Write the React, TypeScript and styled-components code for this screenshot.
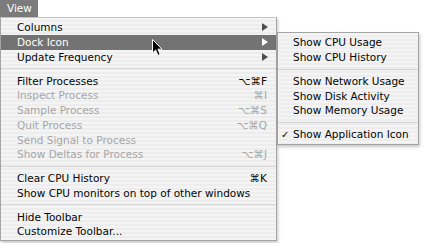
import React from "react";
import styled, { createGlobalStyle } from "styled-components";

const GlobalStyle = createGlobalStyle`
    html, body {
        margin: 0;
        padding: 0;
        background: #ffffff;
    }
    body {
        font-family: "DejaVu Sans", "Liberation Sans", sans-serif;
        font-size: 10.5px;
    }
`;

type Entry =
    | { sep: true }
    | {
          sep?: false;
          label: string;
          shortcut?: string;
          disabled?: boolean;
          submenu?: boolean;
          active?: boolean;
          checked?: boolean;
      };

const viewMenu: Entry[] = [
    { label: "Columns", submenu: true },
    { label: "Dock Icon", submenu: true, active: true },
    { label: "Update Frequency", submenu: true },
    { sep: true },
    { label: "Filter Processes", shortcut: "⌥⌘F" },
    { label: "Inspect Process", shortcut: "⌘I", disabled: true },
    { label: "Sample Process", shortcut: "⌥⌘S", disabled: true },
    { label: "Quit Process", shortcut: "⌥⌘Q", disabled: true },
    { label: "Send Signal to Process", disabled: true },
    { label: "Show Deltas for Process", shortcut: "⌥⌘J", disabled: true },
    { sep: true },
    { label: "Clear CPU History", shortcut: "⌘K" },
    { label: "Show CPU monitors on top of other windows" },
    { sep: true },
    { label: "Hide Toolbar" },
    { label: "Customize Toolbar..." },
];

const dockMenu: Entry[] = [
    { label: "Show CPU Usage" },
    { label: "Show CPU History" },
    { sep: true },
    { label: "Show Network Usage" },
    { label: "Show Disk Activity" },
    { label: "Show Memory Usage" },
    { sep: true },
    { label: "Show Application Icon", checked: true },
];

const Screen = styled.div`
    position: relative;
    width: 425px;
    height: 243px;
    overflow: hidden;
    background: #ffffff;
`;

const MenuBar = styled.div`
    display: flex;
    height: 17px;
`;

const MenuTitle = styled.div`
    background: #7b7b7b;
    color: #ffffff;
    padding: 0 6px 0 7px;
    line-height: 17px;
`;

const Menus = styled.div`
    display: flex;
    align-items: flex-start;
`;

const Panel = styled.div`
    box-sizing: border-box;
    border: 1px solid #a4a4a4;
    background: repeating-linear-gradient(
        to bottom,
        #f4f4f4 0px,
        #f4f4f4 2px,
        #ededed 2px,
        #ededed 4px
    );
    box-shadow: 1px 2px 3px rgba(0, 0, 0, 0.22);
    color: #050505;
`;

const MainMenu = styled(Panel)`
    width: 277px;
    padding: 2px 0 1px;
    border-top-color: #c4c4c4;
`;

const SubMenu = styled(Panel)`
    width: 142px;
    margin-top: 15px;
    padding: 2px 0 2px;
`;

const Row = styled.div<{ $active?: boolean; $disabled?: boolean; $inset: number }>`
    display: flex;
    align-items: center;
    height: 14.75px;
    padding: 0 9px 0 ${(p) => p.$inset}px;
    white-space: nowrap;
    background: ${(p) => (p.$active ? "#737373" : "transparent")};
    color: ${(p) => (p.$active ? "#ffffff" : p.$disabled ? "#a6a6a6" : "#050505")};
`;

const Check = styled.span`
    width: 12px;
    flex: none;
    font-size: 10px;
`;

const Shortcut = styled.span`
    margin-left: auto;
`;

const Arrow = styled.span<{ $active?: boolean }>`
    margin-left: auto;
    margin-right: -1px;
    width: 0;
    height: 0;
    border-top: 4px solid transparent;
    border-bottom: 4px solid transparent;
    border-left: 6px solid ${(p) => (p.$active ? "#ffffff" : "#4c4c4c")};
`;

const Separator = styled.div`
    height: 9px;
    display: flex;
    align-items: center;

    &::after {
        content: "";
        flex: 1;
        height: 1px;
        background: #d6d6d6;
    }
`;

const Pointer = styled.svg`
    position: absolute;
    left: 151px;
    top: 38px;
`;

const MenuList = ({ entries, inset, checks }: { entries: Entry[]; inset: number; checks?: boolean }) => (
    <>
        {entries.map((e, i) =>
            e.sep ? (
                <Separator key={i} />
            ) : (
                <Row key={i} $active={e.active} $disabled={e.disabled} $inset={inset}>
                    {checks && <Check>{e.checked ? "✓" : ""}</Check>}
                    <span>{e.label}</span>
                    {e.shortcut && <Shortcut>{e.shortcut}</Shortcut>}
                    {e.submenu && <Arrow $active={e.active} />}
                </Row>
            )
        )}
    </>
);

export default function App() {
    return (
        <Screen>
            <GlobalStyle />
            <MenuBar>
                <MenuTitle>View</MenuTitle>
            </MenuBar>
            <Menus>
                <MainMenu>
                    <MenuList entries={viewMenu} inset={16} />
                </MainMenu>
                <SubMenu>
                    <MenuList entries={dockMenu} inset={3} checks />
                </SubMenu>
            </Menus>
            <Pointer width="13" height="19" viewBox="0 0 13 19">
                <path
                    d="M1.5 1.5 L1.5 15 L4.6 12 L7 17.4 L9.2 16.4 L6.9 11.2 L11 11.2 Z"
                    fill="#000"
                    stroke="#fff"
                    strokeWidth="1"
                    strokeLinejoin="round"
                />
            </Pointer>
        </Screen>
    );
}
